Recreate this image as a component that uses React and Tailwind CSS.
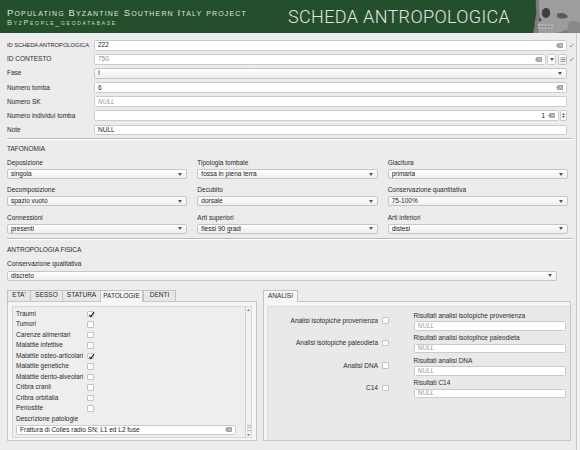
import React from 'react';

// tiny macOS-ish widgets, the screenshot is heavily scaled down

function ClearIcon() {
  return (
    <svg width="7" height="5" viewBox="0 0 14 10" className="shrink-0">
      <path d="M4 0 H12.5 A1.5 1.5 0 0 1 14 1.5 V8.5 A1.5 1.5 0 0 1 12.5 10 H4 L0 5 Z" fill="#a3a3a3" />
      <path d="M7 3 L11 7 M11 3 L7 7" stroke="#f4f4f4" strokeWidth="1.4" />
    </svg>
  );
}

function GreenCheck() {
  return (
    <svg width="5" height="5" viewBox="0 0 10 10">
      <path d="M1.5 5.5 L4 8 L8.5 1.5" fill="none" stroke="#4c9a4c" strokeWidth="1.6" />
    </svg>
  );
}

function Caret() {
  return (
    <svg width="4" height="3" viewBox="0 0 8 6" className="shrink-0">
      <path d="M0 0 H8 L4 6 Z" fill="#555" />
    </svg>
  );
}

function Checkbox({ checked }) {
  return (
    <div className="relative w-[6.5px] h-[6.5px] bg-white border border-[#c4c4c4] rounded-[1px] shrink-0">
      {checked && (
        <svg width="7" height="7" viewBox="0 0 10 10" className="absolute left-[-0.5px] top-[-1px]">
          <path d="M2 5.5 L4.2 8 L8.5 1.5" fill="none" stroke="#111" strokeWidth="1.5" />
        </svg>
      )}
    </div>
  );
}

function Input({ value, placeholder, clear, muted, right, className = 'flex-1' }) {
  return (
    <div className={`${className} h-full bg-white border border-[#cbcbcb] rounded-[1.5px] flex items-center pl-[3px] pr-[3px] gap-[3px] min-w-0`}>
      <span
        className={`flex-1 truncate ${right ? 'text-right' : ''} ${
          placeholder ? 'italic text-[#9a9a9a]' : muted ? 'text-[#8c8c8c]' : 'text-[#222]'
        }`}
      >
        {placeholder || value}
      </span>
      {clear && <ClearIcon />}
    </div>
  );
}

function Select({ value, className = '' }) {
  return (
    <div
      className={`${className} h-[10px] bg-linear-to-b from-white to-[#eeeeee] border border-[#c6c6c6] rounded-[2px] flex items-center justify-between pl-[3px] pr-[4px]`}
    >
      <span className="text-[#222] truncate">{value}</span>
      <Caret />
    </div>
  );
}

function Row({ label, labelClass = '', check, children }) {
  return (
    <div className="flex items-center h-[10.5px]">
      <div className={`w-[87px] shrink-0 text-[#2b2b2b] whitespace-nowrap ${labelClass}`}>{label}</div>
      <div className="flex-1 h-full flex items-center">{children}</div>
      <div className="w-[9px] shrink-0 flex justify-center">{check && <GreenCheck />}</div>
    </div>
  );
}

function Field({ label, value }) {
  return (
    <div className="flex flex-col">
      <div className="h-[9px] leading-[9px] text-[#2b2b2b]">{label}</div>
      <Select value={value} className="mt-[2px]" />
    </div>
  );
}

function Separator({ className = '' }) {
  return <div className={`${className} h-[2px] w-[566px] border-t border-[#b9b9b9] border-b border-b-white`} />;
}

function Skull() {
  return (
    <svg width="47" height="33" viewBox="0 0 47 33" className="shrink-0">
      <path d="M3 0 H47 V33 H0 C2 28 1 22 3 16 C4 10 2 5 3 0 Z" fill="#7c7c7c" />
      <path
        d="M6 0 H47 V26 C42 29 38 30 33 30 C30 31 26 33 20 33 H5 C7 29 4 25 6 20 C8 14 5 7 6 0 Z"
        fill="#9d9d9d"
      />
      <ellipse cx="13" cy="13" rx="4.2" ry="5" fill="#3f3f3f" />
      <path d="M6 17 L9 20 L6 22 Z" fill="#4a4a4a" />
      <path d="M24 14 C28 12 33 13 35 17 C31 19 27 19 24 17 Z" fill="#5a5a5a" />
      <path d="M5 24 H20 V29 H5 Z" fill="#b9b9b9" />
      <path d="M8 24 V29 M11 24 V29 M14 24 V29 M17 24 V29 M5 26.5 H20" stroke="#777" strokeWidth="0.6" />
      <path d="M36 22 C40 20 44 21 47 23 V33 H34 C35 29 34 25 36 22 Z" fill="#888" />
    </svg>
  );
}

function Tab({ label, width, active, last }) {
  return (
    <div
      className={`${width} flex items-center justify-center border-t border-l border-[#c2c2c2] ${
        last || active ? 'border-r' : ''
      } ${active ? 'h-[12px] bg-[#f6f6f6] relative z-10 self-start' : 'h-[11px] bg-[#e7e7e7]'} text-[#2b2b2b]`}
    >
      <span className="mb-[1px]">{label}</span>
    </div>
  );
}

const patologie = [
  ['Traumi', true],
  ['Tumori', false],
  ['Carenze alimentari', false],
  ['Malattie infettive', false],
  ['Malattie osteo-articolari', true],
  ['Malattie genetiche', false],
  ['Malattie dento-alveolari', false],
  ['Cribra cranii', false],
  ['Cribra orbitalia', false],
  ['Periostite', false],
];

const analisi = [
  ['Analisi isotopiche provenienza', 'Risultati analisi isotopiche provenienza'],
  ['Analisi isotopiche paleodieta', 'Risultati analisi isotopihce paleodieta'],
  ['Analisi DNA', 'Risultati analisi DNA'],
  ['C14', 'Risultati C14'],
];

export default function App() {
  return (
    <div className="w-[580px] h-[450px] overflow-hidden bg-[#ececec] font-['Liberation_Sans',Arial,sans-serif] text-[6.5px] leading-[8px] flex flex-col">
      {/* header */}
      <div className="h-[33px] shrink-0 bg-[#244f2c] flex">
        <div className="w-[288px] shrink-0 pl-[7px] pt-[7px]">
          <div className="text-[9.5px] leading-[11px] tracking-[1.15px] text-[#dfe4df] [font-variant:small-caps] whitespace-nowrap">
            Populating Byzantine Southern Italy project
          </div>
          <div className="text-[7.4px] leading-[9px] tracking-[1.7px] text-[#d4dcbc] [font-variant:small-caps] whitespace-nowrap">
            ByzPeople_geodatabase
          </div>
        </div>
        <div className="pt-[5.7px] font-['Roboto',Arial,sans-serif] font-light text-[18px] tracking-[0.35px] leading-[22px] text-[#e4e4e4] whitespace-nowrap">
          SCHEDA ANTROPOLOGICA
        </div>
        <div className="ml-auto">
          <Skull />
        </div>
      </div>

      <div className="flex flex-1 min-h-0">
        <div className="w-[576px] shrink-0 pl-[7px] flex flex-col">
          {/* identification rows */}
          <div className="flex flex-col gap-[3.6px] pt-[7px]">
            <Row label="ID SCHEDA ANTROPOLOGICA" labelClass="text-[5.8px] tracking-[-0.05px]" check>
              <Input value="222" clear />
            </Row>
            <Row label="ID CONTESTO" check>
              <Input value="750" muted clear />
              <div className="ml-[1px] w-[9px] h-full bg-white border border-[#cbcbcb] rounded-[1.5px] flex items-center justify-center">
                <Caret />
              </div>
              <div className="ml-[2px] w-[9px] h-full bg-linear-to-b from-white to-[#ececec] border border-[#c4c4c4] rounded-[1.5px] flex items-center justify-center">
                <svg width="6" height="5" viewBox="0 0 12 10">
                  <path d="M1 1.5 H11 M1 5 H11 M1 8.5 H11" stroke="#666" strokeWidth="1.3" />
                </svg>
              </div>
            </Row>
            <Row label="Fase">
              <Select value="I" className="flex-1 h-full" />
            </Row>
            <Row label="Numero tomba">
              <Input value="6" clear />
            </Row>
            <Row label="Numero SK">
              <Input placeholder="NULL" />
            </Row>
            <Row label="Numero individui tomba">
              <Input value="1" right clear />
              <div className="ml-[1px] w-[7px] h-full bg-white border border-[#cbcbcb] rounded-[1.5px] flex flex-col items-center justify-center gap-[1px]">
                <svg width="3" height="2" viewBox="0 0 6 4"><path d="M0 4 L3 0 L6 4 Z" fill="#555" /></svg>
                <svg width="3" height="2" viewBox="0 0 6 4"><path d="M0 0 L6 0 L3 4 Z" fill="#555" /></svg>
              </div>
            </Row>
            <Row label="Note">
              <Input value="NULL" />
            </Row>
          </div>

          <Separator className="mt-[3px]" />

          {/* tafonomia */}
          <div className="mt-[4.4px] h-[10px] leading-[10px] text-[#2b2b2b]">TAFONOMIA</div>
          <div className="mt-[3.7px] w-[561px] grid grid-cols-3 gap-x-[10px] gap-y-[6.3px]">
            <Field label="Deposizione" value="singola" />
            <Field label="Tipologia tombale" value="fossa in piena terra" />
            <Field label="Giacitura" value="primaria" />
            <Field label="Decomposizione" value="spazio vuoto" />
            <Field label="Decubito" value="dorsale" />
            <Field label="Conservazione quantitativa" value="75-100%" />
            <Field label="Connessioni" value="presenti" />
            <Field label="Arti superiori" value="flessi 90 gradi" />
            <Field label="Arti inferiori" value="distesi" />
          </div>

          <Separator className="mt-[4px]" />

          {/* antropologia fisica */}
          <div className="mt-[5.3px] h-[10px] leading-[10px] text-[#2b2b2b]">ANTROPOLOGIA FISICA</div>
          <div className="mt-[4px] h-[9px] leading-[9px] text-[#2b2b2b]">Conservazione qualitativa</div>
          <Select value="discreto" className="mt-[2.7px] w-[550px]" />

          {/* tab widgets */}
          <div className="mt-[9px] flex gap-[6px]">
            <div className="w-[250px] flex flex-col">
              <div className="flex h-[11px]">
                <Tab label="ETA'" width="w-[23px]" />
                <Tab label="SESSO" width="w-[32px]" />
                <Tab label="STATURA" width="w-[38px]" />
                <Tab label="PATOLOGIE" width="w-[43px]" active />
                <Tab label="DENTI" width="w-[33px]" last />
              </div>
              <div className="h-[140px] border border-[#c6c6c6] bg-[#f5f5f5] pl-[4px] pt-[4px] pr-[4px] pb-[2px] flex">
                <div className="flex-1 border border-[#d6d6d6] bg-[#eeeeee] flex">
                  <div className="flex-1 pl-[3px] pt-[2px] flex flex-col">
                    {patologie.map(([label, checked]) => (
                      <div key={label} className="h-[10.5px] flex items-center">
                        <div className="w-[71px] shrink-0 text-[#2b2b2b] whitespace-nowrap">{label}</div>
                        <Checkbox checked={checked} />
                      </div>
                    ))}
                    <div className="h-[10.5px] flex items-center text-[#2b2b2b]">Descrizione patologie</div>
                    <Input value="Frattura di Colles radio SN; L1 ed L2 fuse" clear className="mt-[0.5px] w-[220px] !h-[10px]" />
                  </div>
                  <div className="w-[6px] border-l border-[#d0d0d0] bg-[#f2f2f2] flex flex-col items-center justify-between pt-[2px] pb-[1px]">
                    <svg width="3" height="2" viewBox="0 0 6 4"><path d="M0 4 L3 0 L6 4 Z" fill="#777" /></svg>
                    <div className="flex flex-col items-center gap-[3px]">
                      <div className="w-[4px] h-[6px] border-y border-[#b8b8b8] flex items-center">
                        <div className="w-full h-[1px] bg-[#b8b8b8]" />
                      </div>
                      <svg width="3" height="2" viewBox="0 0 6 4"><path d="M0 0 L6 0 L3 4 Z" fill="#777" /></svg>
                    </div>
                  </div>
                </div>
              </div>
            </div>

            <div className="w-[308px] flex flex-col">
              <div className="flex h-[11px]">
                <Tab label="ANALISI" width="w-[35px]" active />
              </div>
              <div className="h-[140px] border border-[#c6c6c6] bg-[#f5f5f5] pl-[3px] pt-[4px] flex">
                <div className="flex-1 bg-[#e9e9e9] border-l border-t border-[#dcdcdc] pt-[4px] flex flex-col gap-[2.5px]">
                  {analisi.map(([left, right]) => (
                    <div key={left} className="h-[20px] flex items-center">
                      <div className="w-[110px] shrink-0 text-right text-[#2b2b2b] whitespace-nowrap">{left}</div>
                      <div className="ml-[4px]">
                        <Checkbox />
                      </div>
                      <div className="ml-[25px] w-[152px] flex flex-col">
                        <div className="h-[9px] leading-[9px] text-[#2b2b2b] whitespace-nowrap">{right}</div>
                        <div className="mt-[1.5px] h-[9.5px]">
                          <Input placeholder="NULL" className="w-full" />
                        </div>
                      </div>
                    </div>
                  ))}
                </div>
              </div>
            </div>
          </div>
        </div>
        <div className="flex-1 border-l border-[#c8c8c8] bg-[#f1f1f1]" />
      </div>
    </div>
  );
}
